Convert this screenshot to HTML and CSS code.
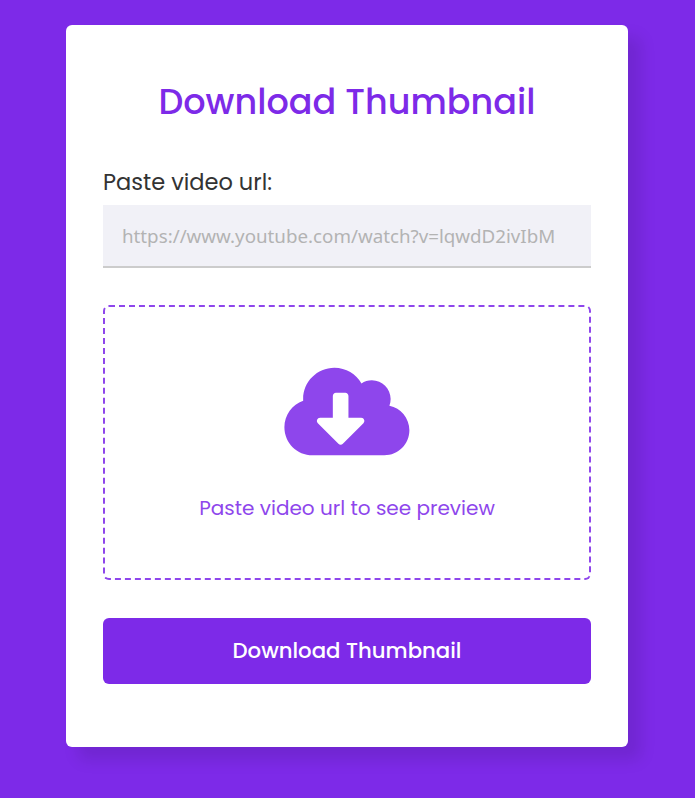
FILE: index.html
```html
<!DOCTYPE html>
<html lang="en">
<head>
<meta charset="utf-8">
<title>Download Thumbnail</title>
<link rel="stylesheet" href="styles.css">
</head>
<body>
<form class="card">
  <header class="title"><span>Download Thumbnail</span></header>
  <label class="label" for="url"><span>Paste video url:</span></label>
  <input class="field" id="url" type="text" placeholder="https://www.youtube.com/watch?v=lqwdD2ivIbM">
  <div class="preview">
    <svg class="icon" viewBox="-2 33 645.12 450.56" aria-hidden="true">
      <path fill-rule="evenodd" d="M537.6 226.6c4.100-10.700 6.400-22.400 6.400-34.600 0-53-43-96-96-96-19.700 0-38.100 6-53.300 16.200C367 64.200 315.300 32 256 32c-88.400 0-160 71.600-160 160 0 2.700.1 5.400.2 8.100C40.200 219.800 0 273.200 0 336c0 79.500 64.500 144 144 144h368c70.700 0 128-57.300 128-128 0-61.900-44-113.600-102.400-125.400zm-132.900 88.700L299.300 420.700c-6.200 6.200-16.400 6.200-22.600 0L171.300 315.300c-10.100-10.100-2.900-27.300 11.300-27.300H248V176c0-8.800 7.200-16 16-16h48c8.800 0 16 7.200 16 16v112h65.400c14.200 0 21.400 17.200 11.300 27.300z"/>
    </svg>
    <span class="hint">Paste video url to see preview</span>
  </div>
  <button class="download" type="button"><span>Download Thumbnail</span></button>
</form>
</body>
</html>
```

FILE: styles.css
```css
* { box-sizing: border-box; margin: 0; padding: 0; }
body {
  min-height: 798px;
  padding: 25px 67px 51px 66px;
  background: #7d2ae8;
  font-family: Poppins, "Open Sans", sans-serif;
}
.card {
  height: 722px;
  padding: 53px 37px 63px;
  display: flex;
  flex-direction: column;
  background: #fff;
  border-radius: 6px;
  box-shadow: 12.5px 12.5px 16.25px rgba(0, 0, 0, .1);
}
.title { height: 48px; line-height: 48px; text-align: center; color: #7d2ae8; font-size: 35px; font-weight: 500; white-space: nowrap; }
.label { height: 34px; margin-top: 39px; line-height: 34px; color: #333; font-size: 22.5px; }
.field { height: 63px; margin-top: 6px; padding: 0 19px; border: 0; border-bottom: 2px solid #ccc; background: #f1f1f7; font-family: "Noto Sans", sans-serif; font-size: 18.75px; outline: 0; }
.field::placeholder { color: #b3b3b3; opacity: 1; }
.preview { height: 275px; margin-top: 37px; padding-top: 61px; display: flex; flex-direction: column; align-items: center; border: 2px dashed #8e46ec; border-radius: 6px; color: #8e46ec; }
.icon { width: 126px; height: 88px; overflow: visible; fill: currentColor; }
.hint { margin-top: 35px; line-height: 34px; font-size: 20px; white-space: nowrap; }
.download { height: 66px; margin-top: 38px; border: 0; border-radius: 6px; color: #fff; background: #7d2ae8; font: 500 21.25px/66px Poppins, "Open Sans", sans-serif; white-space: nowrap; }
```
